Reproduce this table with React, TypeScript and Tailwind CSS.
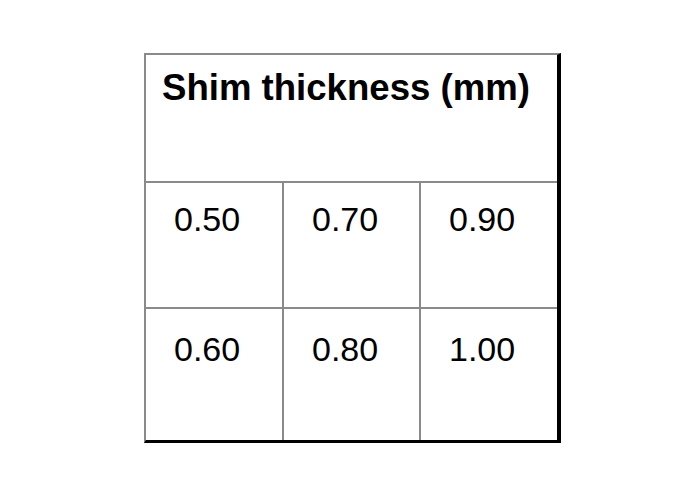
import React from "react";

const font = { fontFamily: '"Liberation Sans", Arial, sans-serif' };

function Cell({ v, last, pt }: { v: string; last?: boolean; pt: string }) {
  return (
    <div
      className={`${last ? "" : "border-r-2 border-r-[#8a8a8a]"} pl-[28px] ${pt} text-[34px] leading-none text-black`}
    >
      {v}
    </div>
  );
}

export default function App() {
  return (
    <div className="w-[688px] h-[498px] bg-white pl-[144px] pt-[53px]" style={font}>
      <div className="w-[417px] border-l-2 border-t-2 border-l-[#8a8a8a] border-t-[#8a8a8a] border-r-4 border-b-[3px] border-r-black border-b-black">
        <div className="h-[128px] border-b-2 border-b-[#8a8a8a] pl-[16px] pt-[15px]">
          <div className="text-[36.6px] font-bold leading-none text-black whitespace-nowrap">
            Shim thickness (mm)
          </div>
        </div>
        <div className="grid grid-cols-[138px_137px_136px] h-[126px] border-b-2 border-b-[#8a8a8a]">
          <Cell v="0.50" pt="pt-[19px]" />
          <Cell v="0.70" pt="pt-[19px]" />
          <Cell v="0.90" pt="pt-[19px]" last />
        </div>
        <div className="grid grid-cols-[138px_137px_136px] h-[131px]">
          <Cell v="0.60" pt="pt-[23px]" />
          <Cell v="0.80" pt="pt-[23px]" />
          <Cell v="1.00" pt="pt-[23px]" last />
        </div>
      </div>
    </div>
  );
}
